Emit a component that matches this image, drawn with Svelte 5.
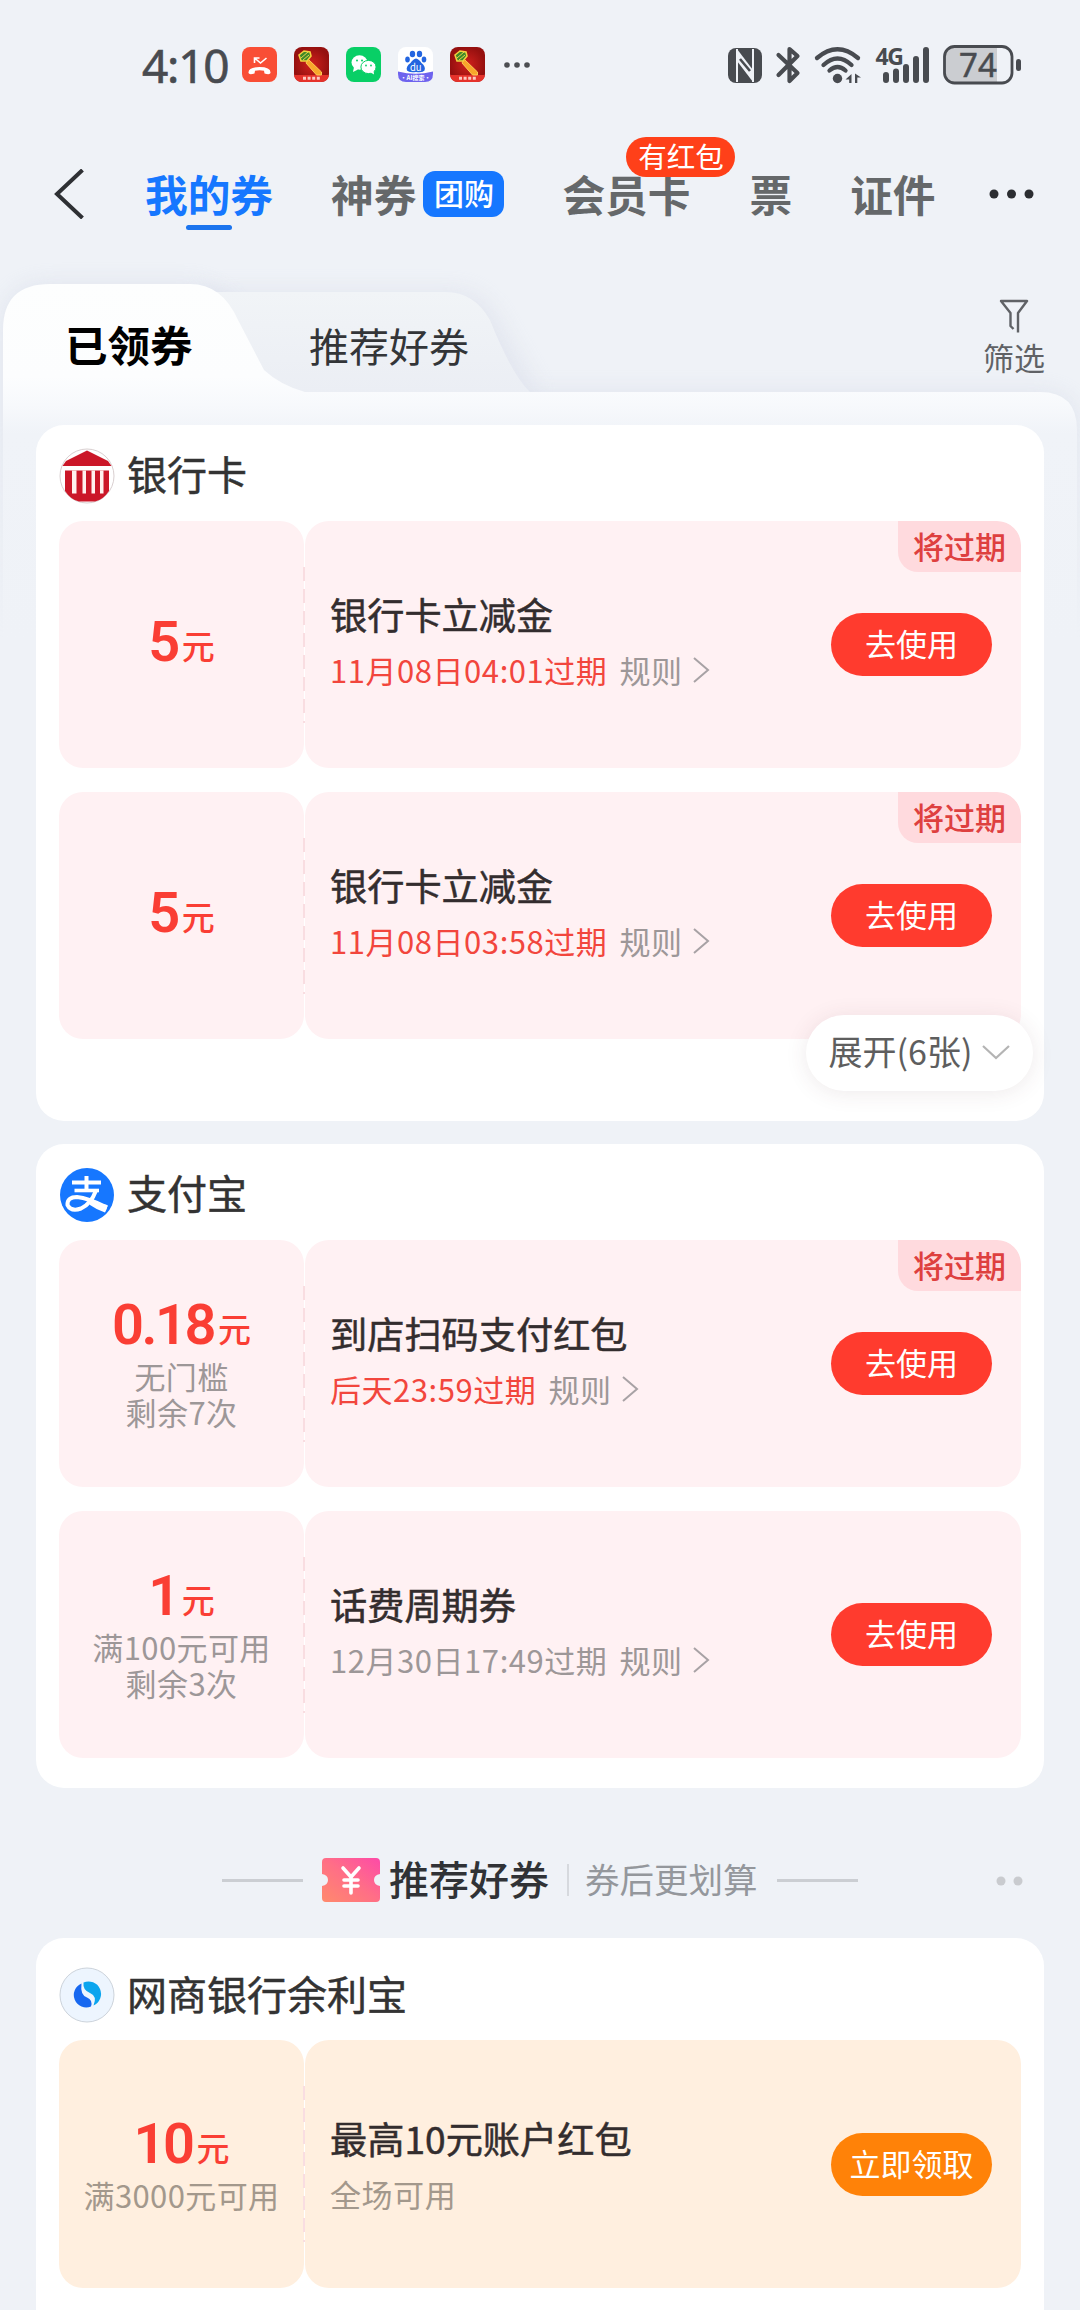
<script>
  const groups = [
    {
      name: '银行卡', icon: 'bank', expand: '展开(6张)',
      coupons: [
        { amount: '5', subs: [], title: '银行卡立减金', date: '11月08日04:01过期', urgent: true },
        { amount: '5', subs: [], title: '银行卡立减金', date: '11月08日03:58过期', urgent: true }
      ]
    },
    {
      name: '支付宝', icon: 'alipay',
      coupons: [
        { amount: '0.18', subs: ['无门槛', '剩余7次'], title: '到店扫码支付红包', date: '后天23:59过期', urgent: true },
        { amount: '1', subs: ['满100元可用', '剩余3次'], title: '话费周期券', date: '12月30日17:49过期', urgent: false }
      ]
    }
  ];
  const recommended = [
    {
      name: '网商银行余利宝', icon: 'mybank', warm: true,
      coupons: [
        { amount: '10', subs: ['满3000元可用'], title: '最高10元账户红包', note: '全场可用' }
      ]
    }
  ];
</script>

{#snippet axeApp()}
  <svg class="app" viewBox="0 0 35 35">
    <defs>
      <radialGradient id="axeBg"><stop offset="0" stop-color="#d0201c" /><stop offset="1" stop-color="#95100f" /></radialGradient>
    </defs>
    <rect width="35" height="35" rx="8" fill="url(#axeBg)" />
    <path d="M0 28h35q-1 7-8 7H8q-7 0-8-7z" fill="#e5322b" />
    <path d="M14 12l13.500 13v3h-5L12 16z" fill="#f8a62b" stroke="#ffd45c" stroke-width=".9" />
    <path d="M5 8l5-4 6 1 1 4-4 5-6 0z" fill="#3e8a28" stroke="#f3cf3f" stroke-width="1.600" />
    <path d="M7 11l7-6M9 13l6-5" stroke="#e8d34c" stroke-width="1" />
    <path d="M9 29.800h3v3H9zm4.600 0h3v3h-3zm4.600 0h3v3h-3zm4.600 0h3v3h-3z" fill="#ffe4dc" opacity=".85" />
  </svg>
{/snippet}

{#snippet brand(kind)}
  <svg class="brand" viewBox="0 0 56 56">
    {#if kind === 'bank'}
      <circle cx="28" cy="28" r="27" fill="#fff" stroke="#d9cfd0" />
      <path d="M3.500 18L7 13 28 2.500 49 13l3.500 5z" fill="#cb1728" />
      <path d="M6 22.500H50V43Q44 52 36 53.500H20Q12 52 6 43z" fill="#cb1728" />
      <path d="M13 22.500h4.500v23H13zM23.500 22.500h3.500v23h-3.500zM32.500 22.500H36v23h-3.500zM41 22.500h3.500v23H41z" fill="#fff1ee" />
    {:else if kind === 'alipay'}
      <circle cx="28" cy="28" r="27" fill="#1677ff" />
      <g fill="none" stroke="#fff" stroke-linecap="butt">
        <path d="M13 15.500h29M27.500 9v15" stroke-width="4" />
        <path d="M15.500 23.500h24.500" stroke-width="3.600" />
        <path d="M37 23.500Q32 37 22 41.500Q12 45 8.500 38Q8 30 18 30Q29 31 48 40.500" stroke-width="4" />
      </g>
      <path d="M31 34.500L48.500 38Q48 43 46 45.500Q38 43 31 38z" fill="#fff" />
    {:else}
      <circle cx="28" cy="28" r="27" fill="#edf5fe" stroke="#ccd3db" />
      <path d="M22.500 16.500A12 12 0 0 0 32 39.500Q34 33 28 30.500Q21 28 22.500 16.500z" fill="#1768f0" />
      <path d="M24.500 15.500A12 12 0 0 1 34.500 38.500Q38.500 29 31 26Q23.500 23 24.500 15.500z" fill="#0ba5ee" />
    {/if}
  </svg>
{/snippet}

{#snippet card(group)}
  <section class="card" class:warm={group.warm} class:expandable={group.expand}>
    <header class="card-head">{@render brand(group.icon)}<h2>{group.name}</h2></header>
    <div class="coupons">
      {#each group.coupons as c}
        <article class="coupon">
          <div class="left">
            <div class="amount" class:stacked={c.subs.length}><b>{c.amount}</b><i>元</i></div>
            {#each c.subs as s}<div class="sub">{s}</div>{/each}
          </div>
          <div class="right">
            <div class="info">
              <h3>{c.title}</h3>
              {#if c.date}
                <p>
                  <span class:urgent={c.urgent}>{c.date}</span><span class="rule">规则</span>
                  <svg width="18" height="28" viewBox="0 0 18 28"><path d="M2 2l14 12L2 26" fill="none" stroke="#a8a2a5" stroke-width="2" /></svg>
                </p>
              {:else}
                <p>{c.note}</p>
              {/if}
            </div>
            <button>{c.note ? '立即领取' : '去使用'}</button>
            {#if c.urgent}<span class="tag">将过期</span>{/if}
          </div>
        </article>
      {/each}
    </div>
    {#if group.expand}
      <div class="expand">
        <span>{group.expand}</span>
        <svg width="28" height="16" viewBox="0 0 28 16"><path d="M1 1l13 12L27 1" fill="none" stroke="#b4b4b4" stroke-width="2.200" /></svg>
      </div>
    {/if}
  </section>
{/snippet}

<div class="screen">
  <div class="status">
    <span class="time">4:10</span>
    <div class="apps">
      <svg class="app" viewBox="0 0 35 35">
        <rect width="35" height="35" rx="8" fill="#f94e35" />
        <path d="M12.500 11l6 5 6-5M12.500 16v-5h5" fill="none" stroke="#fff" stroke-width="1.600" />
        <path d="M6.500 26Q6 20 17.500 20T28.500 26Q28 28 22.500 26.500L22 23.800Q17.500 22.500 13 23.800L12.500 26.500Q7 28 6.500 26z" fill="#fff" />
      </svg>
      {@render axeApp()}
      <svg class="app" viewBox="0 0 35 35">
        <rect width="35" height="35" rx="8" fill="#08cf66" />
        <path d="M8 20l-1 5 5-2.500z" fill="#fff" />
        <ellipse cx="13.500" cy="15.500" rx="8" ry="7.200" fill="#fff" />
        <ellipse cx="22.500" cy="20" rx="7.600" ry="6.600" fill="#fff" stroke="#08cf66" stroke-width="1" />
        <path d="M24 25l4 2.500-.5-4z" fill="#fff" />
        <g fill="#08cf66"><circle cx="11" cy="13.500" r="1" /><circle cx="16" cy="13.500" r="1" /><circle cx="20" cy="18.500" r=".9" /><circle cx="25" cy="18.500" r=".9" /></g>
      </svg>
      <svg class="app" viewBox="0 0 35 35">
        <rect width="35" height="35" rx="8" fill="#fff" />
        <path d="M0 24.500Q17.500 29 35 24.500V27q0 8-8 8H8q-8 0-8-8z" fill="#6e63ee" />
        <g fill="#2365e0"><ellipse cx="14.500" cy="7" rx="2.700" ry="3.300" /><ellipse cx="21.500" cy="7" rx="2.700" ry="3.300" /><ellipse cx="9.500" cy="12.500" rx="2.300" ry="3" /><ellipse cx="26" cy="12.500" rx="2.300" ry="3" />
          <path d="M18 11.500Q21 12 23.500 16Q28 19.500 26.500 23.500Q25 26 18 25Q11 26 9 23.500Q7.500 19.500 12.500 16Q15 12 18 11.500z" /></g>
        <text x="17.800" y="23.500" font-size="9.500" fill="#fff" text-anchor="middle">du</text>
        <text x="17.500" y="33" font-size="6" font-weight="700" fill="#fff" text-anchor="middle">·AI搜索·</text>
      </svg>
      {@render axeApp()}
    </div>
    <svg class="more-s" width="28" height="8" viewBox="0 0 28 8" fill="#4c4e52"><circle cx="4" cy="4" r="2.800" /><circle cx="14" cy="4" r="2.800" /><circle cx="24" cy="4" r="2.800" /></svg>
    <svg class="sys" width="300" height="64" viewBox="724 32 300 64" fill="none" stroke="#484b50">
      <rect x="728" y="47" width="34" height="35" rx="8" fill="#484b50" stroke="none" />
      <path d="M737 48V81M753 48V81" stroke="#eff2f7" stroke-width="2" />
      <path d="M737 48l16 21v12l-16-21z" fill="#eff2f7" stroke="none" />
      <path d="M740 58l10 12M740 67l9 12" stroke="#484b50" stroke-width="2.600" />
      <path d="M778.500 54l19 18-8 8V48l8 7-19 19" stroke-width="4.200" stroke-linejoin="round" stroke-linecap="round" />
      <g stroke-width="4.300" stroke-linecap="round">
        <path d="M817 57Q837.500 39.500 858 57" /><path d="M823.500 64Q837.500 51 851.500 64" /><path d="M829.500 69.500Q837.500 62.500 845.500 69.500" />
      </g>
      <circle cx="837.500" cy="77.500" r="4.700" fill="#484b50" stroke="none" />
      <path d="M845.500 78.500l6-5.500v9h-2.300v-3.500zM861 76.500l-6-4v9.500h2.300v-5.500z" fill="#484b50" stroke="none" />
      <text x="875.500" y="64" class="g4">4G</text>
      <g stroke-width="6" stroke-linecap="round"><path d="M886 74v5M896 70.500v8.500M906 66v13M916 58v21M926 49v30" /></g>
      <path d="M956 46h41v36H956q-11 0-11-11V57q0-11 11-11z" fill="#cbcdd1" stroke="none" />
      <rect x="944.500" y="45.500" width="67.500" height="36.500" rx="10" stroke-width="2.800" />
      <rect x="1016" y="58" width="5" height="12" rx="2.500" fill="#484b50" stroke="none" />
      <text x="978" y="75.500" class="batt">74</text>
    </svg>
  </div>

  <nav>
    <svg class="back" width="32" height="50" viewBox="0 0 32 50"><path d="M28.500 1L3 25l25.500 24" fill="none" stroke="#2e3034" stroke-width="4" /></svg>
    <span class="item t1">我的券</span>
    <span class="item t2">神券</span><span class="chip">团购</span>
    <span class="item t3">会员卡<em>有红包</em></span>
    <span class="item t4">票</span>
    <span class="item t5">证件</span>
    <svg class="dots" width="46" height="10" viewBox="0 0 46 10" fill="#2b2d31"><circle cx="5" cy="5" r="4.500" /><circle cx="22.500" cy="5" r="4.500" /><circle cx="40" cy="5" r="4.500" /></svg>
  </nav>

  <div class="tabs">
    <svg class="shape" width="1080" height="166" viewBox="0 259 1080 166">
      <defs>
        <linearGradient id="sheet" gradientUnits="userSpaceOnUse" x1="0" y1="284" x2="0" y2="640">
          <stop offset="0" stop-color="#fdfefe" /><stop offset=".26" stop-color="#fcfdfe" /><stop offset=".34" stop-color="#f7f9fc" /><stop offset=".42" stop-color="#f0f3f8" /><stop offset="1" stop-color="#eff2f7" />
        </linearGradient>
        <linearGradient id="tab2" x1="0" y1="0" x2="0" y2="1"><stop offset="0" stop-color="#f1f4f7" /><stop offset="1" stop-color="#ebeef4" /></linearGradient>
        <linearGradient id="fadeDown" gradientUnits="userSpaceOnUse" x1="0" y1="420" x2="0" y2="640"><stop offset="0" stop-color="#fff" /><stop offset="1" stop-color="#000" /></linearGradient>
        <mask id="fade" maskUnits="userSpaceOnUse" x="0" y="200" width="1080" height="460"><rect y="200" width="1080" height="460" fill="url(#fadeDown)" /></mask>
        <filter id="soft" x="-10%" y="-30%" width="120%" height="160%"><feGaussianBlur stdDeviation="11" /></filter>
      </defs>
      <g mask="url(#fade)">
        <path d="M3 640V330Q3 284 50 284H190Q226 284 244 330Q262 375 305 392H1040Q1077 392 1077 430V640z" fill="#ccd1e2" opacity=".42" filter="url(#soft)" />
        <path d="M200 291H456Q484 291 500 325L540 395H200z" fill="#d4d8e6" opacity=".45" filter="url(#soft)" />
      </g>
      <path d="M200 292H446Q474 292 490 320Q512 375 530 392H200z" fill="url(#tab2)" />
      <path d="M3 640V330Q3 284 50 284H190Q222 284 238 320L264 370Q280 385 305 392H1040Q1077 392 1077 430V640z" fill="url(#sheet)" />
    </svg>
    <div class="tabrow">
      <span class="tab active">已领券</span>
      <span class="tab">推荐好券</span>
      <span class="filter">
        <svg width="30" height="35" viewBox="0 0 30 35"><path d="M19 33.500V14L28 2H2L11.500 14V27l3 3" fill="none" stroke="#606266" stroke-width="2.400" stroke-linejoin="round" /></svg>
        筛选
      </span>
    </div>
  </div>

  <main>
    {#each groups as g}{@render card(g)}{/each}
    <div class="divider">
      <span class="line"></span>
      <svg class="ticket" width="58" height="44" viewBox="0 0 58 44">
        <defs><linearGradient id="tk" x1="0" y1="1" x2="1" y2="0"><stop offset="0" stop-color="#ff8a6c" /><stop offset=".5" stop-color="#ff6f86" /><stop offset="1" stop-color="#fd4aa8" /></linearGradient></defs>
        <path d="M4 0H54Q58 0 58 4V16Q52 17 52 22T58 28V40Q58 44 54 44H4Q0 44 0 40V28Q6 27 6 22T0 16V4Q0 0 4 0z" fill="url(#tk)" />
        <path d="M21 10l8 9 8-9M29 19v16M22 22h14M22 28h14" fill="none" stroke="#fff" stroke-width="3.600" stroke-linecap="round" />
      </svg>
      <strong>推荐好券</strong>
      <span class="bar"></span>
      <span class="hint">券后更划算</span>
      <span class="line"></span>
      <svg class="pager" width="30" height="10" viewBox="0 0 30 10" fill="#c9cbcf"><circle cx="6" cy="5" r="4.500" /><circle cx="23" cy="5" r="4.500" /></svg>
    </div>
    {#each recommended as g}{@render card(g)}{/each}
  </main>
</div>

<style>
  :global(body) { margin: 0; background: #eff2f7; }
  .screen {
    width: 1080px; height: 2310px; overflow: hidden; background: #eff2f7;
    font-family: 'Noto Sans CJK SC', sans-serif; color: #333;
  }
  h2, h3, p { margin: 0; font-weight: 500; }

  .status { height: 129px; display: flex; align-items: center; box-sizing: border-box; padding-left: 142px; }
  .time { width: 100px; font: 400 46px/50px 'Noto Sans', sans-serif; letter-spacing: -1.2px; color: #484b50; -webkit-text-stroke: .6px #484b50; }
  .apps { display: flex; gap: 17px; }
  .app { width: 35px; height: 35px; display: block; font-family: 'Noto Sans CJK SC', sans-serif; }
  .more-s { margin-left: 18px; }
  .sys { margin-left: 193px; }
  .g4 { font: 700 23px 'Noto Sans', sans-serif; font-stretch: 75%; fill: #484b50; stroke: none; letter-spacing: -1.5px; }
  .batt { font: 400 33px 'Noto Sans', sans-serif; fill: #484b50; stroke: #484b50; stroke-width: .5px; text-anchor: middle; }

  nav { height: 130px; display: flex; align-items: center; padding-left: 54px; }
  .back { margin-right: 59px; }
  .item { position: relative; font-size: 42.700px; line-height: 60px; font-weight: 700; color: #65686a; white-space: nowrap; margin-top: -2px; }
  .t1 { color: #1677ff; }
  .t1::after { content: ''; position: absolute; left: 41px; bottom: -7px; width: 46px; height: 5px; border-radius: 3px; background: #1b74ee; }
  .t2 { margin-left: 58px; }
  .chip { margin-left: 7px; width: 81px; height: 46px; border-radius: 12px; background: #1677ff; color: #fff; font-size: 30px; line-height: 43px; font-weight: 500; text-align: center; }
  .t3 { margin-left: 58px; }
  .t3 em { position: absolute; left: 64px; top: -26px; width: 109px; height: 40px; border-radius: 20px; background: #ff4019; color: #fff; font: 400 28.500px/37px 'Noto Sans CJK SC', sans-serif; text-align: center; }
  .t4 { margin-left: 59px; }
  .t5 { margin-left: 58px; }
  .dots { margin-left: 53px; }

  .tabs { height: 166px; display: grid; }
  .shape, .tabrow { grid-area: 1 / 1; }
  .shape { overflow: visible; }
  .tabrow { display: flex; position: relative; padding: 57px 35px 0 65px; }
  .tab { font-size: 40px; line-height: 60px; color: #333538; margin-top: -1px; }
  .active { width: 244px; font-weight: 700; color: #000; font-size: 42.500px; margin-top: -2px; }
  .filter { margin: -17px 0 0 auto; display: flex; flex-direction: column; align-items: center; font-size: 31px; line-height: 45px; color: #606266; }

  main { position: relative; padding: 0 36px; }
  .card { position: relative; height: 644px; margin-bottom: 23px; border-radius: 28px; background: #fff; box-sizing: border-box; padding: 0 23px; }
  .expandable { height: 696px; }
  .card-head { height: 96px; box-sizing: border-box; display: flex; align-items: center; gap: 12px; padding-top: 5px; }
  .card-head h2 { font-size: 40px; line-height: 56px; margin-top: -5px; color: #333; font-weight: 400; -webkit-text-stroke: .5px #333; }
  .brand { width: 56px; height: 56px; }
  .coupons { display: flex; flex-direction: column; gap: 24px; }
  .coupon { display: flex; gap: 1px; height: 247px; position: relative; }
  .coupon::after { content: ''; position: absolute; left: 244px; top: 46px; height: 156px; width: 2px; background: repeating-linear-gradient(#f9dde1 0 14px, transparent 14px 22px); }
  .left { width: 245px; border-radius: 24px; background: #fff1f3; display: flex; flex-direction: column; align-items: center; justify-content: center; }
  .right { position: relative; flex: 1; border-radius: 24px; background: #fff1f3; display: flex; align-items: center; justify-content: space-between; padding: 0 29px 0 25px; overflow: hidden; }
  .amount { display: flex; align-items: baseline; color: #fa3e34; height: 54px; line-height: 54px; margin-top: -6px; }
  .stacked { margin: 0 0 6px; }
  .amount b { font: 600 56px/54px Roboto, sans-serif; letter-spacing: -2.500px; }
  .amount i { position: relative; top: -2px; font-style: normal; font-size: 33px; font-weight: 500; margin-left: 4px; }
  .sub { font-size: 31px; line-height: 36px; color: #9d9798; white-space: nowrap; letter-spacing: .4px; }
  .info { display: flex; flex-direction: column; }
  .info h3 { font-size: 37.200px; line-height: 56px; color: #332d2e; font-weight: 400; -webkit-text-stroke: .5px #332d2e; margin-top: -5px; }
  .info p { display: flex; align-items: center; font-size: 31px; line-height: 56px; font-weight: 400; color: #9d9798; letter-spacing: .55px; }
  .urgent { color: #f2463d; }
  .rule { margin: 0 9px 0 12px; }
  button { width: 161px; height: 63px; border: 0; padding: 0 0 4px; border-radius: 32px; background: #ff3b2e; color: #fff; font: 400 31px/59px 'Noto Sans CJK SC', sans-serif; }
  .tag { position: absolute; right: 0; top: 0; width: 123px; height: 51px; border-radius: 0 24px 0 20px; background: #ffdade; color: #de403f; font-size: 31px; line-height: 49px; font-weight: 500; text-align: center; }
  .expand { position: absolute; right: 11px; top: 590px; width: 227px; height: 76px; border-radius: 38px; background: #fff; box-shadow: 0 2px 22px rgba(90, 50, 60, .1); display: flex; align-items: center; justify-content: center; gap: 10px; font-size: 34px; line-height: 70px; color: #5e5e5e; }
  .expand span { margin-top: -4px; }
  .warm .left, .warm .right { background: #ffefdf; }
  .warm button { background: #ff8208; }
  .warm .sub, .warm p { color: #a3988c; }
  .warm .card-head { height: 102px; padding-top: 12px; }
  .warm .coupon { height: 248px; }
  .warm h3 { margin-top: 3px; }
  .warm .stacked { margin-top: 1px; }

  .divider { height: 150px; margin-top: -23px; display: flex; align-items: center; padding-left: 186px; }
  .divider .line { width: 81px; height: 3px; background: #cbced3; margin-top: 34px; }
  .ticket { margin: 34px 9px 0 19px; }
  .divider strong { font-size: 40px; line-height: 60px; font-weight: 500; color: #303236; margin-top: 30px; }
  .bar { width: 2px; height: 32px; margin: 34px 16px 0 18px; background: #d6d9de; }
  .hint { font-size: 34.500px; line-height: 50px; color: #94979c; margin: 30px 19px 0 0; }
  .pager { margin: 36px 0 0 137px; }
</style>
